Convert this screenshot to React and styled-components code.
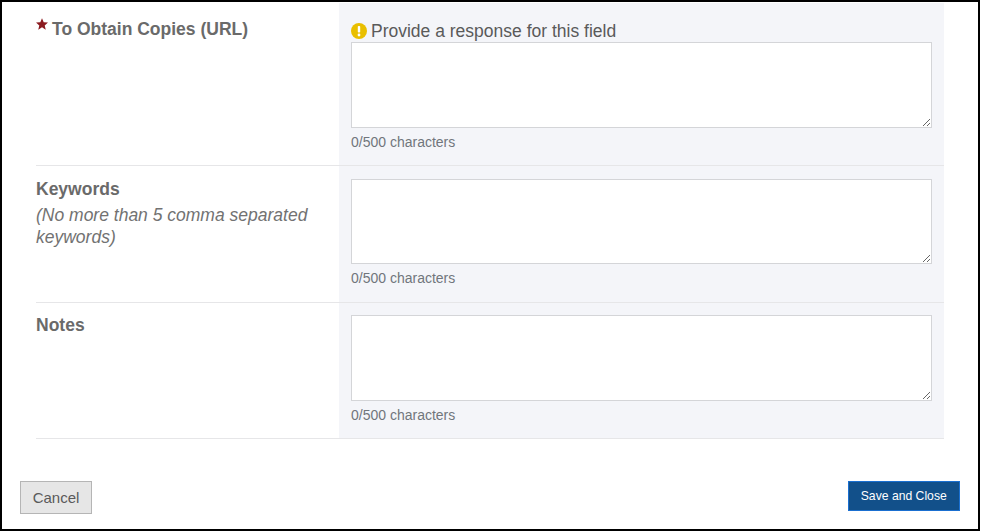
import React from 'react';
import styled, { createGlobalStyle } from 'styled-components';

const GlobalStyle = createGlobalStyle`
    html, body {
        margin: 0;
        padding: 0;
        background: #fff;
        font-family: "Liberation Sans", Arial, sans-serif;
    }
`;

const fields = [
    { id: 'copies', label: 'To Obtain Copies (URL)', required: true, warning: 'Provide a response for this field' },
    { id: 'keywords', label: 'Keywords', hint: '(No more than 5 comma separated keywords)' },
    { id: 'notes', label: 'Notes' },
];

export default function App() {
    return (
        <Frame>
            <GlobalStyle />
            <Form>
                {fields.map((field) => (
                    <Row key={field.id}>
                        <LabelCell $required={field.required}>
                            <Label htmlFor={field.id}>
                                {field.required && <RequiredStar />}
                                {field.label}
                            </Label>
                            {field.hint && <Hint>{field.hint}</Hint>}
                        </LabelCell>
                        <InputCell $warning={field.warning}>
                            {field.warning && (
                                <Warning>
                                    <WarningIcon />
                                    {field.warning}
                                </Warning>
                            )}
                            <TextArea id={field.id} />
                            <Counter>0/500 characters</Counter>
                        </InputCell>
                    </Row>
                ))}
            </Form>

            <Footer>
                <CancelButton>Cancel</CancelButton>
                <SaveButton>Save and Close</SaveButton>
            </Footer>
        </Frame>
    );
}

function RequiredStar() {
    return (
        <Star viewBox="0 0 24 24" aria-hidden="true">
            <path d="M12 0.500l3.400 8 8.600.7-6.600 5.600 2.100 8.500L12 18.700l-7.500 4.600 2.100-8.500L0 9.200l8.600-.7z" fill="#8b1a1f" />
        </Star>
    );
}

function WarningIcon() {
    return (
        <WarningSvg viewBox="0 0 16 16" aria-hidden="true">
            <circle cx="8" cy="8" r="8" fill="#e9bf00" />
            <rect x="6.800" y="3" width="2.400" height="6.600" rx="0.8" fill="#fff" />
            <circle cx="8" cy="12" r="1.400" fill="#fff" />
        </WarningSvg>
    );
}

const Frame = styled.div`
    box-sizing: border-box;
    width: 980px;
    height: 531px;
    border: 2px solid #000;
    display: flex;
    flex-direction: column;
    background: #fff;
    overflow: hidden;
`;

const Form = styled.div`
    padding: 1px 0 0 34px;
    width: 908px;
`;

const Row = styled.div`
    display: grid;
    grid-template-columns: 303px 605px;
    border-bottom: 1px solid #e6e6e8;
`;

const LabelCell = styled.div`
    padding: ${(props) => (props.$required ? '15px' : '12.5px')} 24px 0 0;
`;

const Label = styled.label`
    display: block;
    font-size: 17.5px;
    line-height: 21px;
    font-weight: bold;
    color: #6a6a6a;
`;

const Star = styled.svg`
    width: 12px;
    height: 12px;
    margin-right: 4px;
    vertical-align: 5px;
`;

const Hint = styled.div`
    margin-top: 4px;
    font-size: 17.5px;
    line-height: 22px;
    font-style: italic;
    color: #727272;
`;

const InputCell = styled.div`
    background: #f4f5f9;
    padding: ${(props) => (props.$warning ? '17px' : '12.5px')} 12px 14.5px 12px;
    display: flex;
    flex-direction: column;
`;

const Warning = styled.div`
    display: flex;
    align-items: center;
    height: 22px;
    font-size: 17.5px;
    color: #5a5a5a;
`;

const WarningSvg = styled.svg`
    width: 16px;
    height: 16px;
    margin-right: 4px;
`;

const TextArea = styled.textarea`
    display: block;
    box-sizing: border-box;
    width: 581px;
    height: 85.5px;
    margin: 0;
    padding: 4px;
    background: #fff;
    border: 1px solid #d4d5d8;
    border-radius: 0;
    outline: none;
    resize: vertical;
`;

const Counter = styled.div`
    margin-top: 6px;
    font-size: 14px;
    line-height: 17px;
    color: #71767c;
`;

const Footer = styled.div`
    margin-top: 42px;
    padding: 0 18px;
    display: flex;
    justify-content: space-between;
    align-items: flex-start;
`;

const CancelButton = styled.button`
    box-sizing: border-box;
    width: 72px;
    height: 33px;
    padding: 0;
    background: #e6e6e6;
    border: 1px solid #b5b5b5;
    border-radius: 0;
    font-family: inherit;
    font-size: 15px;
    color: #5a5a5a;
`;

const SaveButton = styled.button`
    box-sizing: border-box;
    width: 112.5px;
    height: 30px;
    padding: 0;
    background: #12508a;
    border: 1px solid #1a6fd0;
    border-radius: 0;
    font-family: inherit;
    font-size: 12.2px;
    font-weight: 500;
    color: #fff;
`;
